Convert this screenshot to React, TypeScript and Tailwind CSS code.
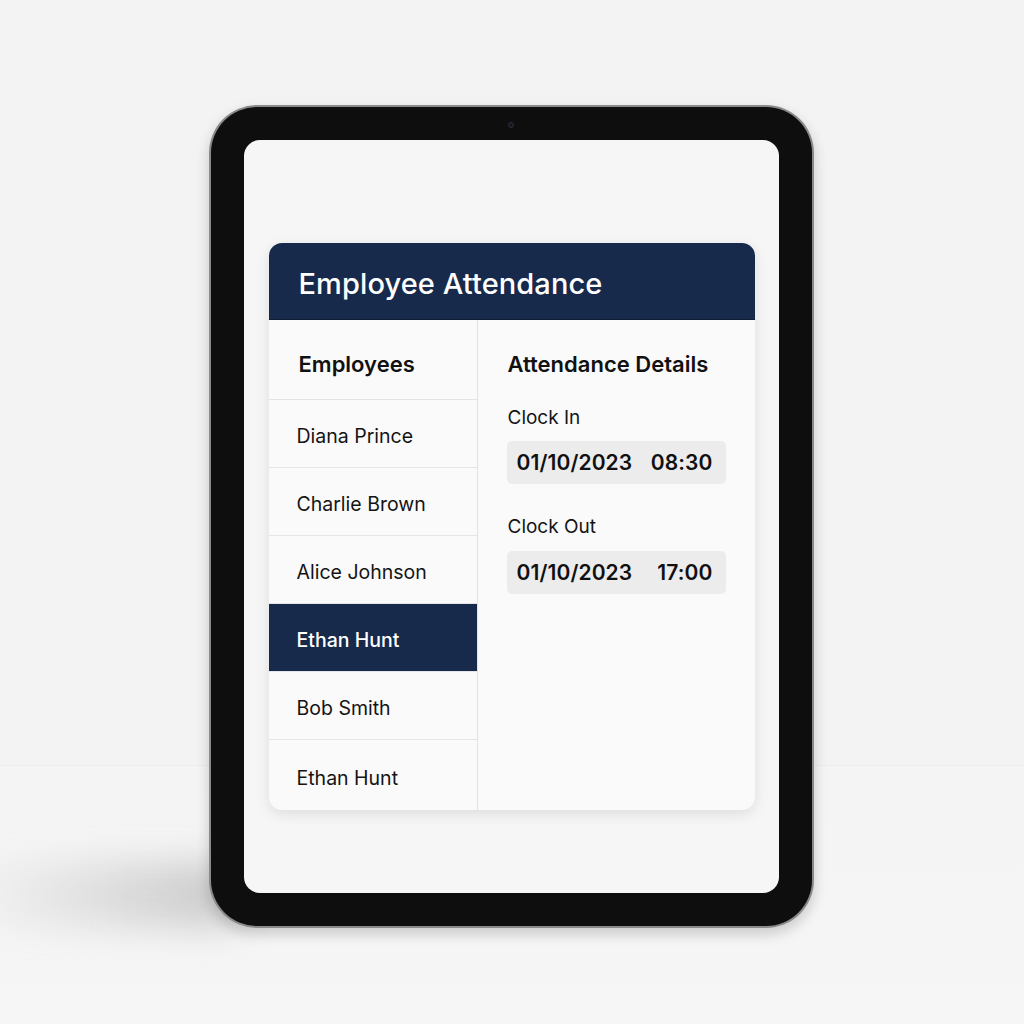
import React, { useState } from 'react';

const EMPLOYEES = ['Diana Prince', 'Charlie Brown', 'Alice Johnson', 'Ethan Hunt', 'Bob Smith', 'Ethan Hunt'];

const TimeBox = ({ date, time }: { date: string; time: string }) => (
  <div className="w-[219px] h-[43px] rounded-[5px] bg-[#ececec] flex items-center justify-between pl-[10px] pr-[13px] text-[21px] font-semibold text-[#111] tracking-[0.1px]">
    <span>{date}</span>
    <span>{time}</span>
  </div>
);

const App: React.FC = () => {
  const [selected, setSelected] = useState(3);

  return (
    <div className="relative w-full h-[1024px] overflow-hidden bg-[#f3f3f3] font-['Inter','Noto_Sans',sans-serif]">
      {/* floor */}
      <div className="absolute left-0 right-0 top-[765px] bottom-0 bg-gradient-to-b from-[#f4f4f4] to-[#f6f6f6] border-t border-[#ececec]" />
      {/* cast shadow */}
      <div className="absolute left-[-40px] top-[862px] w-[290px] h-[66px] rounded-full bg-gradient-to-r from-transparent via-[#d8d8d8] to-[#bcbcbc] blur-[18px] opacity-80" />

      <div className="relative flex justify-center pt-[105px] pr-[2px]">
        <div className="relative w-[605px] h-[823px] rounded-[48px] bg-[#8a8a8a] p-[2px] shadow-[0_6px_14px_rgba(0,0,0,0.18)]">
          <div className="relative w-full h-full rounded-[46px] bg-[#0e0e0e] p-[33px]">
            <div className="absolute left-1/2 top-[15px] -translate-x-1/2 w-[6px] h-[6px] rounded-full border border-[#2c3140] bg-[#15171c]" />

            <div className="w-full h-full rounded-[16px] bg-[#f6f6f6] pt-[103px] pl-[25px] pr-[24px]">
              <div className="rounded-[13px] bg-[#fafafa] shadow-[0_4px_14px_rgba(0,0,0,0.10)] overflow-hidden">
                <div className="h-[77px] bg-[#172a4c] flex items-center pl-[30px] pt-[6px] border-b border-[#0f1d36]">
                  <h1 className="text-[29px] font-medium text-white tracking-[0.1px]">Employee Attendance</h1>
                </div>

                <div className="flex h-[490px]">
                  <div className="w-[209px] flex flex-col border-r border-[#e3e3e3]">
                    <div className="h-[80px] pl-[30px] pt-[30px] border-b border-[#e3e3e3]">
                      <h2 className="text-[22px] leading-[28px] font-semibold text-[#111]">Employees</h2>
                    </div>
                    {EMPLOYEES.map((name, i) => (
                      <button
                        key={i}
                        onClick={() => setSelected(i)}
                        className={`flex items-center pl-[28px] pt-[7px] text-left text-[19.5px] ${
                          i === EMPLOYEES.length - 1 ? 'flex-1' : 'h-[68px] border-b border-[#e6e6e6]'
                        } ${i === selected ? 'bg-[#172a4c] text-white font-medium border-[#172a4c]' : 'text-[#141414]'}`}
                      >
                        {name}
                      </button>
                    ))}
                  </div>

                  <div className="flex-1 pl-[30px] pt-[30px]">
                    <h2 className="text-[22px] leading-[28px] font-semibold text-[#111]">Attendance Details</h2>
                    <div className="mt-[28px] text-[19px] leading-[24px] text-[#141414]">Clock In</div>
                    <div className="mt-[11px] -ml-[1px]">
                      <TimeBox date="01/10/2023" time="08:30" />
                    </div>
                    <div className="mt-[31px] text-[19px] leading-[24px] text-[#141414]">Clock Out</div>
                    <div className="mt-[12px] -ml-[1px]">
                      <TimeBox date="01/10/2023" time="17:00" />
                    </div>
                  </div>
                </div>
              </div>
            </div>
          </div>
        </div>
      </div>
    </div>
  );
};

export default App;
